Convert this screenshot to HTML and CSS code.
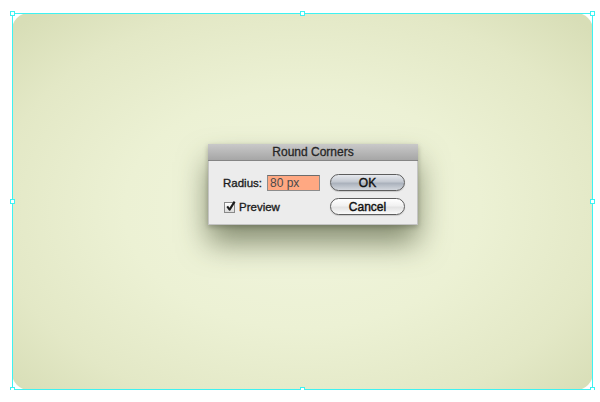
FILE: index.html
```html
<!DOCTYPE html>
<html lang="en">
<head>
  <meta charset="UTF-8" />
  <title>Round Corners</title>
  <link rel="stylesheet" href="styles.css">
</head>
<body>
  <div class="artboard">
    <div class="dialog">
      <div class="dialog-title">Round Corners</div>
      <div class="dialog-body">
        <div class="fields">
          <div class="row">
            <label for="radius">Radius:</label>
            <input id="radius" type="text" value="80 px" />
          </div>
          <div class="row">
            <span class="checkbox">
              <svg width="11" height="11" viewBox="0 0 11 11">
                <path d="M2.2 5.4 L4.6 8.6 L9.6 0.6" fill="none" stroke="#1d1d1d" stroke-width="2.1" stroke-linejoin="round" />
              </svg>
            </span>
            <span class="check-label">Preview</span>
          </div>
        </div>
        <div class="buttons">
          <button class="btn btn-default">OK</button>
          <button class="btn">Cancel</button>
        </div>
      </div>
    </div>

    <div class="selection">
      <span class="handle h-tl"></span>
      <span class="handle h-tm"></span>
      <span class="handle h-tr"></span>
      <span class="handle h-ml"></span>
      <span class="handle h-mr"></span>
      <span class="handle h-bl"></span>
      <span class="handle h-bm"></span>
      <span class="handle h-br"></span>
    </div>
  </div>
</body>
</html>
```

FILE: styles.css
```css
html, body {
  margin: 0;
  padding: 0;
  background: #fff;
  font-family: 'Liberation Sans', Arial, sans-serif;
}

.artboard {
  position: relative;
  margin: 13px 0 0 12px;
  width: 581px;
  height: 377px;
  box-sizing: border-box;
  padding: 131px 0 0 196px;
  border-radius: 17px;
  background: radial-gradient(ellipse 68% 70% at 50% 52%, #f1f5de 0%, #ecf1d4 45%, #e3e8c6 78%, #d8deb7 100%);
}

.selection {
  position: absolute;
  top: 0; left: 0; right: 0; bottom: 0;
  border: 1px solid #3ef2f2;
  pointer-events: none;
}

.handle {
  position: absolute;
  width: 3px;
  height: 3px;
  background: #fff;
  border: 1px solid #3ef2f2;
}

.h-tl { top: -3px; left: -3px; }
.h-tm { top: -3px; left: 287px; }
.h-tr { top: -3px; right: -3px; }
.h-ml { top: 185px; left: -3px; }
.h-mr { top: 185px; right: -3px; }
.h-bl { bottom: -3px; left: -3px; }
.h-bm { bottom: -3px; left: 287px; }
.h-br { bottom: -3px; right: -3px; }

.dialog {
  width: 210px;
  background: #ececec;
  box-shadow: 0 18px 30px rgba(62, 72, 42, 0.6), 0 2px 5px rgba(0, 0, 0, 0.25);
}

.dialog-title {
  height: 16px;
  line-height: 16px;
  text-align: center;
  font-size: 12px;
  color: #262626;
  -webkit-text-stroke: 0.3px #262626;
  background: linear-gradient(#c9c9c9, #a6a6a6);
  border-bottom: 1px solid #858585;
}

.dialog-body {
  display: flex;
  padding: 13px 12px 9px 14px;
  border: 1px solid #c4c4c4;
  border-top: none;
}

.fields {
  flex: 1;
  display: flex;
  flex-direction: column;
  gap: 7px;
}

.row {
  display: flex;
  align-items: center;
  height: 17px;
  font-size: 11.5px;
  color: #1e1e1e;
  -webkit-text-stroke: 0.35px #1e1e1e;
}

.row label {
  width: 44px;
}

.row input {
  width: 53px;
  height: 16px;
  box-sizing: border-box;
  margin: 1px 0 0;
  padding: 0 2px;
  border: 1px solid #8c8c8c;
  border-top-color: #6c6c6c;
  background: #ffa882;
  font-family: 'Liberation Sans', Arial, sans-serif;
  font-size: 12px;
  color: #4a4a4a;
  -webkit-text-stroke: 0;
  outline: none;
}

.checkbox {
  width: 11px;
  height: 11px;
  box-sizing: border-box;
  margin: 2px 4px 0 1px;
  border: 1px solid #8a8a8a;
  background: linear-gradient(#ffffff, #dcdcdc);
  display: flex;
  align-items: center;
  justify-content: center;
}

.checkbox svg {
  margin: -3px -2px 0 0;
  overflow: visible;
}

.buttons {
  display: flex;
  flex-direction: column;
  gap: 7px;
}

.btn {
  width: 75px;
  height: 17px;
  padding: 0;
  border: 1px solid #5d5d5d;
  border-radius: 9px;
  font-family: 'Liberation Sans', Arial, sans-serif;
  font-size: 12px;
  color: #111;
  -webkit-text-stroke: 0.4px #111;
  background: linear-gradient(#ffffff 0%, #f1f1f1 45%, #e3e3e3 55%, #fafafa 100%);
  box-shadow: 0 1px 1px rgba(0, 0, 0, 0.15);
}

.btn-default {
  background: linear-gradient(#e6e9ee 0%, #c4c9d1 45%, #aab1bc 55%, #d3d7dd 100%);
}
```
